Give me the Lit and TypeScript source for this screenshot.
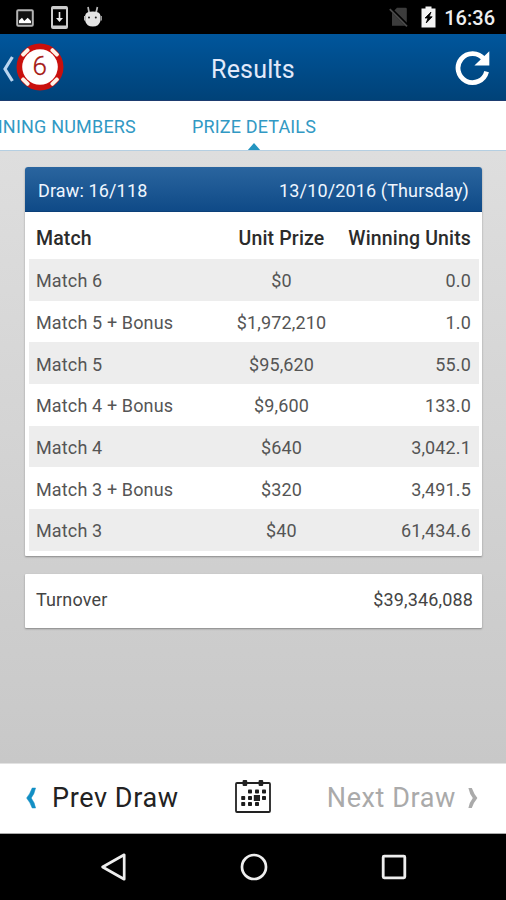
import { LitElement, html, css, svg } from "lit";
import { customElement } from "lit/decorators.js";

interface PrizeRow {
  match: string;
  prize: string;
  units: string;
}

const ROWS: PrizeRow[] = [
  { match: "Match 6", prize: "$0", units: "0.0" },
  { match: "Match 5 + Bonus", prize: "$1,972,210", units: "1.0" },
  { match: "Match 5", prize: "$95,620", units: "55.0" },
  { match: "Match 4 + Bonus", prize: "$9,600", units: "133.0" },
  { match: "Match 4", prize: "$640", units: "3,042.1" },
  { match: "Match 3 + Bonus", prize: "$320", units: "3,491.5" },
  { match: "Match 3", prize: "$40", units: "61,434.6" },
];

// Marked days on the calendar icon, as [x, y]
const DAYS = [
  [13, 9.6], [20, 9.6], [27, 9.6],
  [6.2, 16], [13, 16], [20, 16], [27, 16],
  [6.2, 22], [13, 22], [20, 22],
];

@customElement("status-bar")
class StatusBar extends LitElement {
  static styles = css`
    :host { display: flex; align-items: center; height: 34px; background: #000; color: #eee; box-sizing: border-box; padding: 0 11px 0 16px; }
    svg { display: block; flex: none; }
    .picture { margin-right: 17px; margin-top: 1px; }
    .download { margin-right: 16px; }
    .spacer { flex: 1; }
    .sim { margin-right: 12px; }
    .battery { margin-right: 8px; }
    .time { font-size: 20px; font-weight: 500; height: 32px; line-height: 32px; padding-top: 2px; }
  `;
  render() {
    return html`
      <svg class="picture" width="18" height="18" viewBox="0 0 18 18">
        <rect x="1.2" y="1.2" width="15.6" height="15.6" rx="1" fill="#111" stroke="#b4b4b4" stroke-width="2" />
        <path d="M3 14.2V11.5L6 8.8L8.3 12L11.7 8.8L15 12V14.2Z" fill="#fff" />
      </svg>
      <svg class="download" width="17" height="23" viewBox="0 0 17 23">
        <rect x="1" y="1" width="15" height="21" rx="1" fill="#000" stroke="#ccc" stroke-width="2" />
        <path d="M1 2H16M1 20.8H16" stroke="#ccc" stroke-width="2.6" />
        <path d="M8.5 6V14" stroke="#eee" stroke-width="1.6" />
        <path d="M5 12H12L8.5 16Z" fill="#eee" />
      </svg>
      <svg width="18" height="22" viewBox="0 0 18 22">
        <path d="M4 1L5.2 7M13.4 1L12 7" stroke="#bbb" stroke-width="1.7" />
        <path d="M1.2 9.4Q1.6 5.6 8.8 5.6Q16 5.6 16.4 9.4V15Q15 20.6 8.8 20.6Q2.6 20.6 1.2 15Z" fill="#e4e4e4" />
        <path d="M.6 10V14.5M17.2 10V14.5" stroke="#bbb" stroke-width="1.2" />
        <circle cx="5" cy="11.6" r="1" fill="#222" /><circle cx="11.8" cy="11.6" r="1" fill="#222" />
      </svg>
      <div class="spacer"></div>
      <svg class="sim" width="20" height="20" viewBox="0 0 20 20">
        <path d="M8 .8H16.5Q17.8 .8 17.8 2V18.8H3V5.8Z" fill="#3c3c3c" />
        <path d="M1.4 1.6L18.8 19" stroke="#000" stroke-width="3.4" />
        <path d="M.8 2.2L18 19.4" stroke="#4c4c4c" stroke-width="1.7" />
      </svg>
      <svg class="battery" width="15" height="22" viewBox="0 0 15 22">
        <path d="M4.5 .5H10.5V2.5H14.5V21.5H.5V2.5H4.5Z" fill="#f4f4f4" />
        <path d="M10 6L4 12H7L5.2 17L11.2 10.8H8.2Z" fill="#000" stroke="#000" stroke-width=".8" />
      </svg>
      <div class="time">16:36</div>
    `;
  }
}

@customElement("title-bar")
class TitleBar extends LitElement {
  static styles = css`
    :host { display: grid; grid-template-columns: 1fr auto 1fr; align-items: center; height: 67px; box-sizing: border-box; background: linear-gradient(#00569c, #004278); border-bottom: 1px solid #1d3c70; }
    .home { margin-left: 2px; }
    .title { color: #e2e9fa; font-size: 25px; letter-spacing: .2px; padding-top: 5px; }
    .refresh { justify-self: end; margin: 2px 15px 0 0; }
    svg { display: block; }
    text { font-size: 26px; font-weight: 300; }
  `;
  render() {
    return html`
      <svg class="home" width="62" height="50" viewBox="0 0 62 50">
        <path d="M10.4 15Q6 22 3 27Q6 32 10.4 39" fill="none" stroke="#b9d5f0" stroke-width="3.2" />
        <circle cx="38" cy="25" r="23.5" fill="#c9100d" />
        <g fill="#fff4e8">
          <rect x="33" y="2.4" width="10" height="3.8" rx="1.4" transform="rotate(45 38 25)" />
          <rect x="33" y="2.4" width="10" height="3.8" rx="1.4" transform="rotate(135 38 25)" />
          <rect x="33" y="2.4" width="10" height="3.8" rx="1.4" transform="rotate(225 38 25)" />
          <rect x="33" y="2.4" width="10" height="3.8" rx="1.4" transform="rotate(315 38 25)" />
        </g>
        <circle cx="38" cy="25" r="17.8" fill="#fff" />
        <text x="37.6" y="33.3" text-anchor="middle" fill="#a51612" stroke="#a51612" stroke-width=".3">6</text>
      </svg>
      <div class="title">Results</div>
      <svg class="refresh" width="36" height="36" viewBox="0 0 36 36">
        <path d="M31.6 21.6A14.5 14.5 0 1 1 29 9.2" fill="none" stroke="#fff" stroke-width="4.8" />
        <path d="M34.3 1.2V15.4H19.4Z" fill="#fff" />
      </svg>
    `;
  }
}

@customElement("tab-strip")
class TabStrip extends LitElement {
  static styles = css`
    :host { display: block; position: relative; height: 50px; box-sizing: border-box; overflow: hidden; background: #fff; border-bottom: 1px solid #b5cfe2; }
    .tabs { display: grid; grid-template-columns: 136px 236px; height: 49px; align-items: center; color: #3199c4; font-size: 18px; letter-spacing: .14px; white-space: nowrap; box-sizing: border-box; padding-top: 2px; }
    .tab { justify-self: end; letter-spacing: .2px; }
    .active { justify-self: center; }
    .pointer { position: absolute; left: 247px; bottom: -1px; }
  `;
  render() {
    return html`
      <div class="tabs">
        <div class="tab">WINNING NUMBERS</div>
        <div class="active">PRIZE DETAILS</div>
      </div>
      <svg class="pointer" width="14" height="8" viewBox="0 0 14 8"><path d="M7 0L14 8H0Z" fill="#2495c0" /></svg>
    `;
  }
}

@customElement("prize-card")
class PrizeCard extends LitElement {
  static styles = css`
    :host { display: block; height: 389px; box-sizing: border-box; background: #fff; border-radius: 3px 3px 1px 1px; box-shadow: 0 1px 2px rgba(0, 0, 0, .35); overflow: hidden; font-size: 18px; letter-spacing: .14px; }
    .head { display: flex; justify-content: space-between; align-items: center; height: 45px; box-sizing: border-box; padding: 3px 13px 0; color: #eff6ff; background: linear-gradient(#2a659f, #0f4a87); border-bottom: 1px solid #0c4079; }
    .body { padding: 0 3px 0 4px; }
    .row { display: grid; grid-template-columns: 180px 131px 1fr; align-items: center; height: 41.7px; box-sizing: border-box; padding: 2px 8px 0 7px; color: #555; }
    .row:nth-child(even) { background: #ededed; }
    .titles { height: 47px; padding-top: 5px; color: #2b2b2b; font-weight: 500; font-size: 19.5px; letter-spacing: .15px; white-space: nowrap; }
    .prize { text-align: center; }
    .units { text-align: right; }
  `;
  render() {
    return html`
      <div class="head"><span>Draw: 16/118</span><span>13/10/2016 (Thursday)</span></div>
      <div class="body">
        <div class="row titles"><span>Match</span><span class="prize">Unit Prize</span><span class="units">Winning Units</span></div>
        ${ROWS.map((r) => html`<div class="row"><span>${r.match}</span><span class="prize">${r.prize}</span><span class="units">${r.units}</span></div>`)}
      </div>
    `;
  }
}

@customElement("draw-pager")
class DrawPager extends LitElement {
  static styles = css`
    :host { display: grid; grid-template-columns: 1fr auto 1fr; align-items: center; height: 71px; box-sizing: border-box; background: #fff; border-top: 1px solid #e2e2e2; border-bottom: 1px solid #aaa; padding: 0 28px 1px 26px; font-size: 27px; letter-spacing: .6px; color: #222; }
    .side { display: flex; align-items: center; gap: 16px; white-space: nowrap; }
    .next { justify-content: flex-end; color: #aaa; gap: 12px; }
    .calendar { margin: 0 -1px 3px 1px; }
    svg { display: block; }
  `;
  render() {
    return html`
      <div class="side">
        <svg width="10" height="22" viewBox="0 0 10 22"><path d="M9.6 1H6.2Q4 7 .6 11Q4 15 6.2 21H9.6Q8.4 15 5.2 11Q8.4 7 9.6 1Z" fill="#128fc4" stroke="#128fc4" stroke-width=".5" /></svg>
        <span>Prev Draw</span>
      </div>
      <svg class="calendar" width="36" height="33" viewBox="0 0 36 33">
        <rect x="1" y="3" width="34" height="29" rx="1" fill="#fff" stroke="#222" stroke-width="1.8" />
        <rect x="7.6" y="0" width="4.6" height="6" rx="1" fill="#222" />
        <rect x="23.6" y="0" width="4.6" height="6" rx="1" fill="#222" />
        ${DAYS.map(([x, y]) => svg`<rect x=${x} y=${y} width="4" height="4" rx=".8" fill="#1c1c1c" />`)}
        <rect x="18.8" y="15" width="6.2" height="6" fill="#222" />
      </svg>
      <div class="side next">
        <span>Next Draw</span>
        <svg width="10" height="22" viewBox="0 0 10 22"><path d="M.4 1H3.8Q6 7 9.4 11Q6 15 3.8 21H.4Q1.6 15 4.8 11Q1.6 7 .4 1Z" fill="#aaa" /></svg>
      </div>
    `;
  }
}

@customElement("nav-bar")
class NavBar extends LitElement {
  static styles = css`
    :host { display: flex; justify-content: center; align-items: center; gap: 112px; height: 66px; padding-left: 1px; background: #000; }
    svg { display: block; }
  `;
  render() {
    return html`
      <svg width="28" height="28" viewBox="0 0 28 28"><path d="M24.2 1.8V26.2L2.6 14Z" fill="none" stroke="#eee" stroke-width="2.7" stroke-linejoin="round" /></svg>
      <svg width="28" height="28" viewBox="0 0 28 28"><circle cx="14" cy="14" r="12" fill="none" stroke="#eee" stroke-width="2.7" /></svg>
      <svg width="28" height="28" viewBox="0 0 28 28"><rect x="3.2" y="3.2" width="21.6" height="21.6" rx="1" fill="none" stroke="#eee" stroke-width="2.8" /></svg>
    `;
  }
}

@customElement("app-root")
class AppRoot extends LitElement {
  static styles = css`
    :host { display: flex; flex-direction: column; width: 506px; height: 900px; overflow: hidden; font-family: Roboto, "Liberation Sans", sans-serif; background: #000; }
    .content { flex: 1; display: flex; flex-direction: column; gap: 18px; padding: 16px 24px 0 25px; background: linear-gradient(#dedede, #c8c8c8); }
    .turnover { display: flex; justify-content: space-between; align-items: center; height: 54px; box-sizing: border-box; padding: 0 9px 3px 11px; background: #fff; border-radius: 1px; box-shadow: 0 1px 2px rgba(0, 0, 0, .35); font-size: 18px; letter-spacing: .14px; color: #444; }
  `;
  render() {
    return html`
      <status-bar></status-bar>
      <title-bar></title-bar>
      <tab-strip></tab-strip>
      <div class="content">
        <prize-card></prize-card>
        <div class="turnover"><span>Turnover</span><span>$39,346,088</span></div>
      </div>
      <draw-pager></draw-pager>
      <nav-bar></nav-bar>
    `;
  }
}
